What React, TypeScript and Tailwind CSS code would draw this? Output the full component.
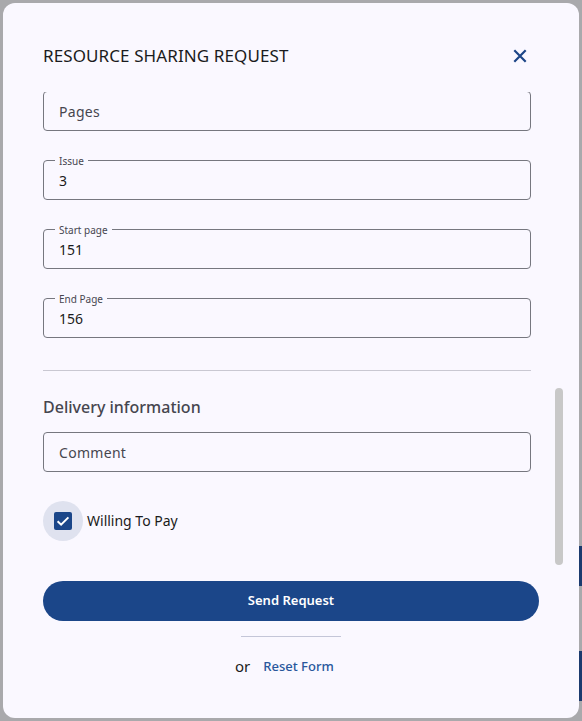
import React from "react";

const font = { fontFamily: '"Noto Sans", "Liberation Sans", sans-serif' };

function Field({ label, value, placeholder, className = "" }: { label?: string; value?: string; placeholder?: string; className?: string }) {
  return (
    <div className={`relative h-[40px] w-[488px] rounded-[4px] border border-[#76777f] ${className}`}>
      {label && (
        <span className="absolute left-[11px] top-[-7px] bg-[#faf8ff] px-[4px] text-[10px] leading-[14px] text-[#46464f]">
          {label}
        </span>
      )}
      <div className="flex h-full items-center pl-[15px] pt-[1px]">
        {value ? (
          <span className="text-[14px] leading-[20px] text-[#1a1b20]">{value}</span>
        ) : (
          <span className="text-[14px] leading-[20px] tracking-[0.3px] text-[#46464f]">{placeholder}</span>
        )}
      </div>
    </div>
  );
}

export default function App() {
  return (
    <div className="relative h-[721px] w-[582px] overflow-hidden bg-[#a9a9ac]" style={font}>
      <div className="absolute right-0 top-[546px] h-[40px] w-[4px] bg-[#1b3a6e]" />
      <div className="absolute right-0 top-[651px] h-[50px] w-[4px] bg-[#1b3a6e]" />
      <div className="absolute left-[3px] top-[3px] flex h-[715px] w-[576px] flex-col overflow-hidden rounded-[12px] bg-[#faf8ff]">
        {/* header */}
        <div className="flex h-[89px] shrink-0 items-start justify-between pl-[40px] pr-[52px] pt-[41px]">
          <h2 className="text-[17px] font-normal leading-[24px] tracking-[0.1px] text-[#1a1b20]">RESOURCE SHARING REQUEST</h2>
          <button className="mt-[5px] flex h-[14px] w-[14px] items-center justify-center">
            <svg width="14" height="14" viewBox="0 0 14 14">
              <path d="M1.3 1.3 L12.7 12.7 M12.7 1.3 L1.3 12.7" stroke="#1c4587" strokeWidth="2.2" strokeLinecap="butt" />
            </svg>
          </button>
        </div>

        {/* scroll area */}
        <div className="relative h-[477px] shrink-0 overflow-hidden">
          <div className="flex flex-col pl-[40px] pt-0 mt-[-1px]">
            <Field placeholder="Pages" />
            <Field label="Issue" value="3" className="mt-[29px]" />
            <Field label="Start page" value="151" className="mt-[29px]" />
            <Field label="End Page" value="156" className="mt-[29px]" />
            <div className="mt-[32px] h-px w-[488px] bg-[#c9c8d2]" />
            <div className="mt-[24px] text-[16px] font-medium leading-[24px] text-[#46464f]">Delivery information</div>
            <Field placeholder="Comment" className="mt-[13px]" />
            <div className="mt-[29px] flex items-center">
              <div className="flex h-[40px] w-[40px] items-center justify-center rounded-full bg-[#dfe2ef]">
                <div className="flex h-[18px] w-[18px] items-center justify-center rounded-[2px] bg-[#1b4689]">
                  <svg width="18" height="18" viewBox="0 0 18 18">
                    <path d="M3.6 9.2 L7.1 12.6 L14.4 5.4" stroke="#ffffff" strokeWidth="2" fill="none" />
                  </svg>
                </div>
              </div>
              <span className="ml-[4px] text-[14px] leading-[20px] text-[#1a1b20]">Willing To Pay</span>
            </div>
          </div>
          <div className="absolute left-[552px] top-[296px] h-[177px] w-[8px] rounded-full bg-[#c8c8c8]" />
        </div>

        {/* footer */}
        <div className="flex flex-col items-start pl-[40px]">
          <button className="mt-[12px] flex h-[40px] w-[496px] items-center justify-center rounded-full bg-[#1b4689] text-[13px] font-semibold text-white">
            Send Request
          </button>
          <div className="mt-[15px] ml-[198px] h-px w-[100px] bg-[#c4c6d8]" />
          <div className="ml-[192px] mt-[19px] flex items-center">
            <span className="text-[15px] leading-[20px] text-[#1a1b20]">or</span>
            <span className="ml-[13px] text-[13px] font-medium leading-[20px] text-[#28579c]">Reset Form</span>
          </div>
        </div>
      </div>
    </div>
  );
}
